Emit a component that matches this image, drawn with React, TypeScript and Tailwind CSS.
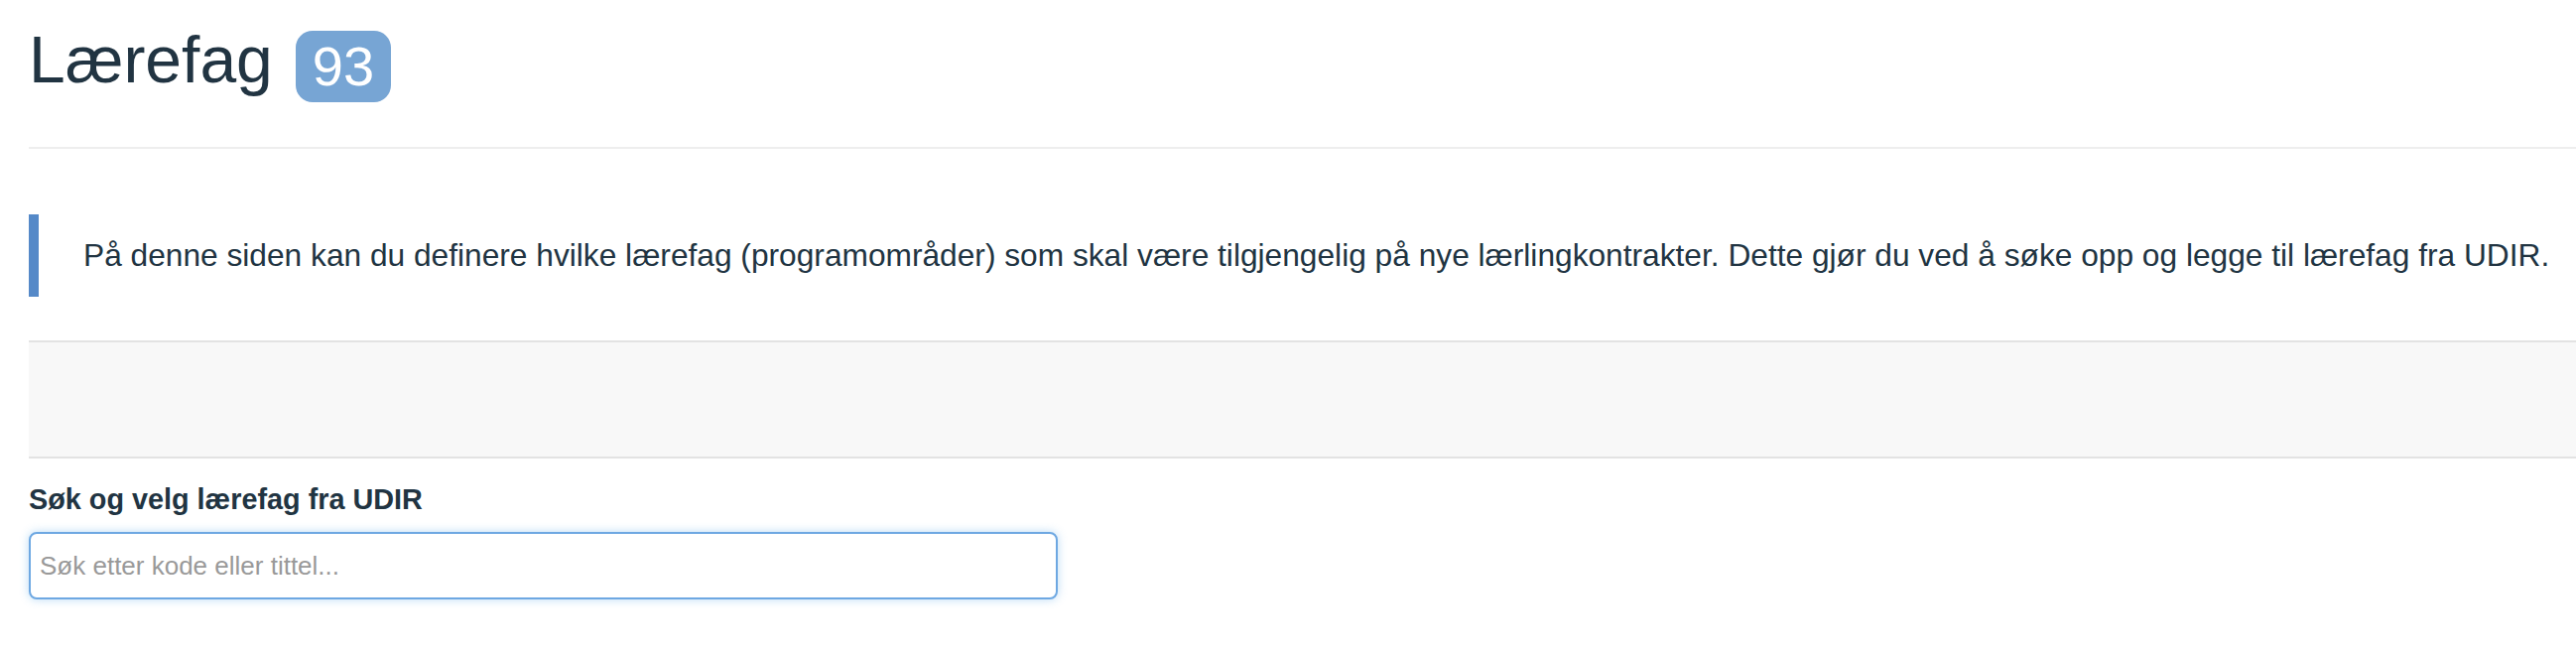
export default function App() {
  return (
    <div
      className="min-h-[660px] bg-white pl-[29px] text-[#213442]"
      style={{ fontFamily: '"Liberation Sans", Arial, sans-serif' }}
    >
      {/* Overskrift med antall */}
      <div className="flex items-start pt-[24px]">
        <h1 className="text-[66px] leading-[1.1] font-normal">Lærefag</h1>
        <span className="ml-[23px] mt-[7px] flex h-[72px] items-center rounded-[17px] bg-[#77a5d4] px-[17px] text-[56px] leading-none text-white">
          93
        </span>
      </div>

      <div className="mt-[45px] h-[2px] bg-[#eeeeee]" />

      <blockquote className="mt-[66px] border-l-[10px] border-[#5589c8] py-[20px] pl-[45px] text-[31.7px] leading-[43px]">
        På denne siden kan du definere hvilke lærefag (programområder) som skal være tilgjengelig på nye lærlingkontrakter. Dette gjør du ved å søke opp og legge til lærefag fra UDIR.
      </blockquote>

      <div className="mt-[44px] h-[119px] border-y-2 border-[#e3e3e3] bg-[#f8f8f8]" />

      <div className="pt-[25px]">
        <label className="block text-[28.8px] font-bold leading-[32px]">Søk og velg lærefag fra UDIR</label>
        <input
          type="text"
          placeholder="Søk etter kode eller tittel..."
          className="mt-[17px] block h-[68px] w-[1037px] rounded-[8px] border-2 border-[#6ea8e2] bg-white pl-[9px] text-[26px] text-[#213442] shadow-[0_0_10px_rgba(102,175,233,0.45)] outline-none placeholder:text-[#999999]"
        />
      </div>
    </div>
  )
}
